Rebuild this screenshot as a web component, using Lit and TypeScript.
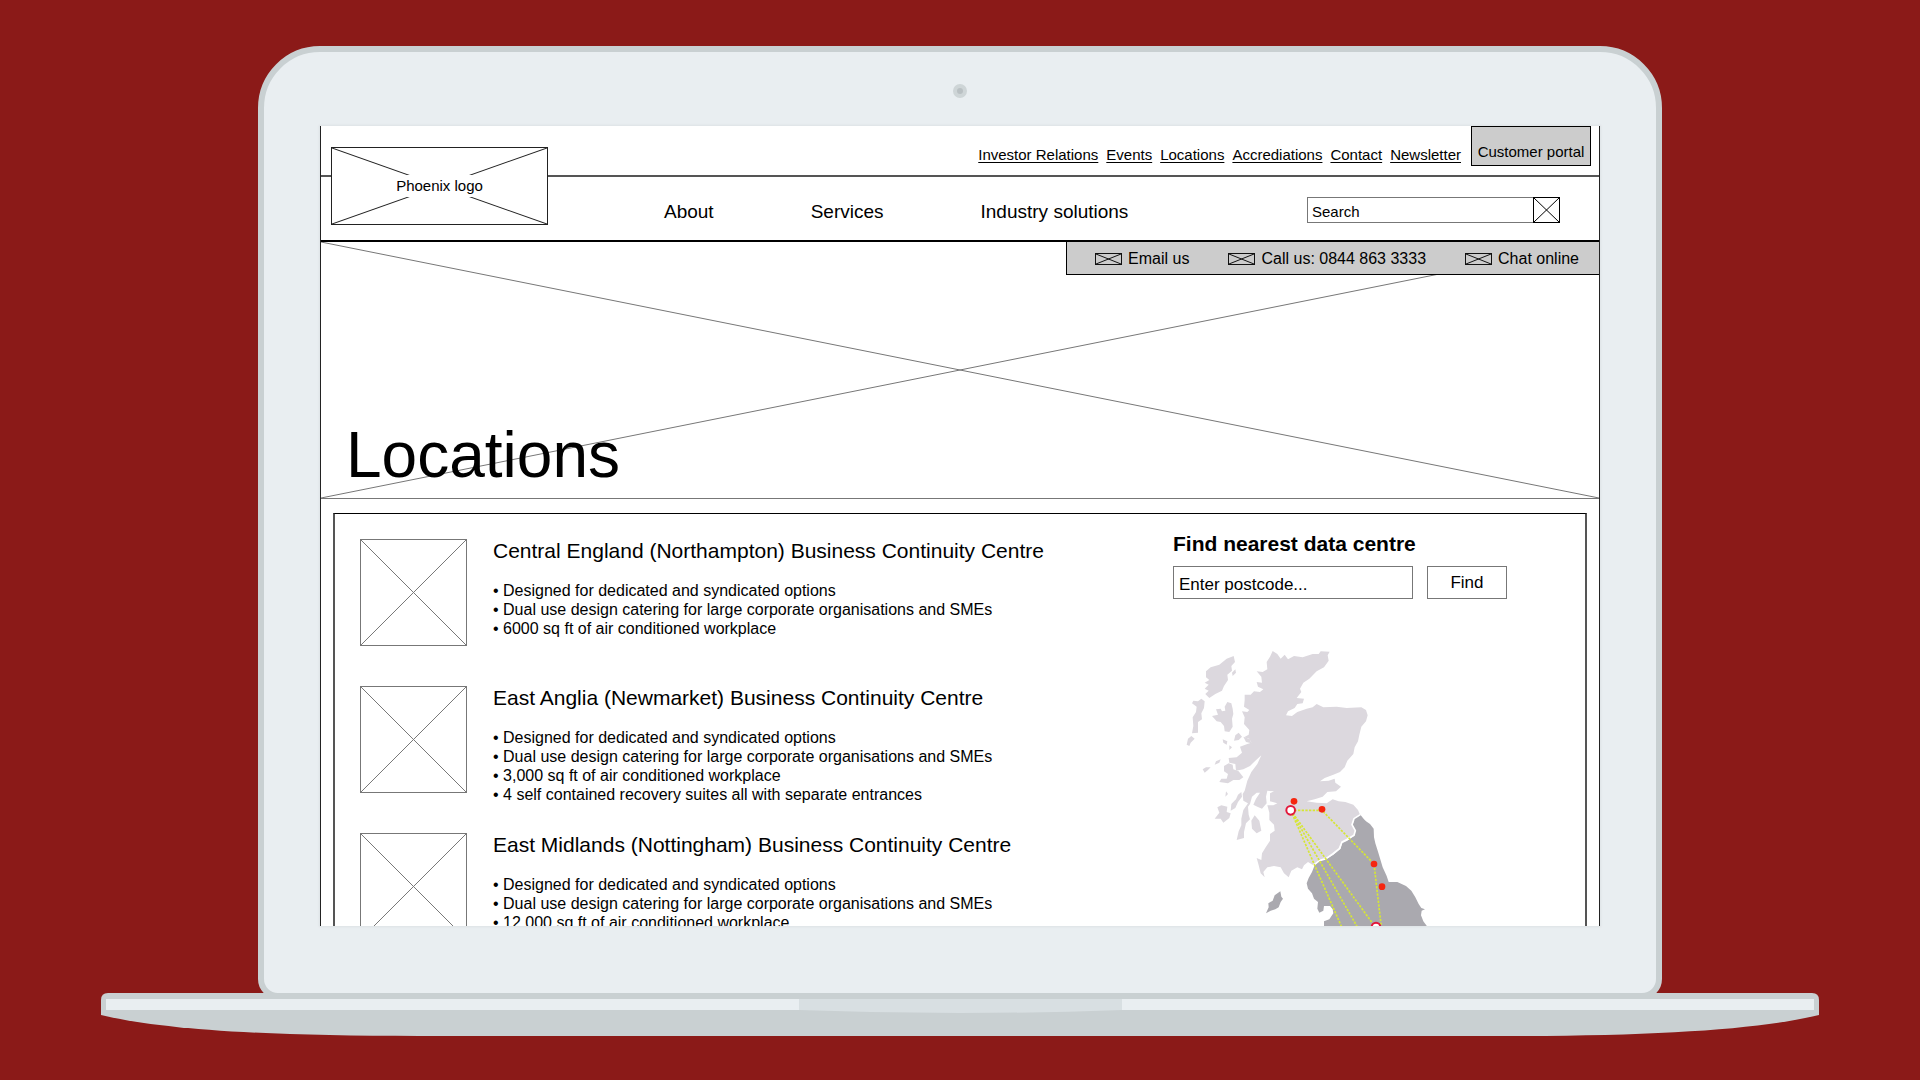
import { LitElement, html, css, svg } from "lit";
import { customElement, property } from "lit/decorators.js";

interface Centre {
  name: string;
  points: string[];
}

const UTILITY_LINKS = ["Investor Relations", "Events", "Locations", "Accrediations", "Contact", "Newsletter"];
const MAIN_LINKS = ["About", "Services", "Industry solutions"];
const CONTACTS = ["Email us", "Call us: 0844 863 3333", "Chat online"];

const CENTRES: Centre[] = [
  {
    name: "Central England (Northampton) Business Continuity Centre",
    points: [
      "Designed for dedicated and syndicated options",
      "Dual use design catering for large corporate organisations and SMEs",
      "6000 sq ft of air conditioned workplace",
    ],
  },
  {
    name: "East Anglia (Newmarket) Business Continuity Centre",
    points: [
      "Designed for dedicated and syndicated options",
      "Dual use design catering for large corporate organisations and SMEs",
      "3,000 sq ft of air conditioned workplace",
      "4 self contained recovery suites all with separate entrances",
    ],
  },
  {
    name: "East Midlands (Nottingham) Business Continuity Centre",
    points: [
      "Designed for dedicated and syndicated options",
      "Dual use design catering for large corporate organisations and SMEs",
      "12,000 sq ft of air conditioned workplace",
    ],
  },
];

/** Wireframe placeholder: a box crossed by its two diagonals. */
@customElement("cross-box")
export class CrossBox extends LitElement {
  static styles = css`
    :host {
      display: block;
      box-sizing: border-box;
      border: 1px solid var(--cross-color, #777);
    }
    .cross {
      display: block;
      width: 100%;
      height: 100%;
    }
    .stroke {
      stroke: var(--cross-color, #777);
      stroke-width: 1;
      vector-effect: non-scaling-stroke;
    }
  `;

  render() {
    return html`<svg class="cross" viewBox="0 0 100 100" preserveAspectRatio="none" aria-hidden="true">
      <line class="stroke" x1="0" y1="0" x2="100" y2="100"></line>
      <line class="stroke" x1="0" y1="100" x2="100" y2="0"></line>
    </svg>`;
  }
}

/** One business continuity centre with its thumbnail and bullet points. */
@customElement("centre-row")
export class CentreRow extends LitElement {
  @property({ attribute: false }) centre!: Centre;

  static styles = css`
    :host {
      display: flex;
      gap: 26px;
      height: 147px;
    }
    .thumb {
      flex: none;
      width: 107px;
      height: 107px;
    }
    .name {
      margin: 0 0 18px;
      font-size: 21px;
      line-height: 24px;
      font-weight: 400;
    }
    .points {
      margin: 0;
      padding: 0;
      list-style: none;
      font-size: 16px;
      line-height: 19px;
    }
    .point::before {
      content: "• ";
    }
  `;

  render() {
    return html`
      <cross-box class="thumb"></cross-box>
      <div>
        <h2 class="name">${this.centre.name}</h2>
        <ul class="points">
          ${this.centre.points.map((p) => html`<li class="point">${p}</li>`)}
        </ul>
      </div>
    `;
  }
}

/** Map of data centres in northern Britain, linked by dotted routes. */
@customElement("centre-map")
export class CentreMap extends LitElement {
  static styles = css`
    :host {
      display: block;
    }
    .map {
      display: block;
      width: 253px;
      height: 300px;
    }
    .north {
      fill: #dcd8de;
    }
    .south {
      fill: #aaa9af;
    }
    .coast {
      fill: none;
      stroke: #fff;
      stroke-width: 5;
      stroke-linejoin: round;
    }
    .route {
      fill: none;
      stroke: #d6e635;
      stroke-width: 5;
      stroke-dasharray: 7 4;
    }
    .site {
      fill: #f5260f;
    }
    .hub {
      fill: #fff;
      stroke: #e3173a;
      stroke-width: 6;
    }
  `;

  render() {
    const sites = [
      [402, 514],
      [486, 538],
      [642, 702],
      [666, 770],
    ];
    const hubs = [
      [392, 541],
      [648, 891],
    ];
    return html`<svg class="map" viewBox="60 45 759 900" role="img" aria-label="Map of data centre locations">
      <path
        class="south"
        d="M601 554 L612 568 L618 574 L630 582 L641 596 L642 622 L646 640 L655 668 L668 712 L680 738 L686 756 L712 756 L738 768 L754 782 L766 802 L776 822 L784 834 L795 838 L785 842 L783 856 L790 874 L802 890 L812 950 L520 950 L492 890 L492 874 L508 868 L520 850 L518 838 L510 828 L492 828 L490 842 L478 848 L472 836 L474 816 L462 806 L456 790 L444 776 L440 760 L446 744 L456 726 L464 706 L478 692 L498 688 L520 674 L542 656 L546 640 L562 632 L584 616 L586 600 L578 586 L582 566 Z"
      ></path>
      <path class="south" d="M361 784 L364 800 L369 806 L362 816 L356 832 L346 838 L332 842 L318 850 L326 832 L325 820 L338 812 L344 796 Z"></path>
      <path
        class="north"
        d="M338 63 L352 72 L362 86 L374 74 L384 88 L402 78 L428 82 L458 72 L476 72 L482 64 L509 65 L503 76 L506 92 L492 112 L470 124 L448 146 L430 158 L420 176 L424 186 L410 204 L432 206 L428 220 L412 222 L404 234 L384 244 L378 256 L396 258 L412 246 L440 236 L458 232 L470 222 L490 232 L530 230 L560 234 L604 232 L618 240 L623 256 L618 274 L604 290 L598 314 L594 334 L584 352 L580 372 L562 392 L554 412 L540 426 L520 434 L494 444 L480 454 L506 452 L524 446 L526 458 L543 470 L528 484 L502 486 L488 500 L464 508 L440 514 L470 518 L500 520 L518 508 L536 514 L556 516 L580 524 L594 540 L600 554 L582 566 L576 584 L586 602 L582 616 L562 628 L546 638 L538 656 L518 672 L498 686 L478 692 L460 706 L444 696 L432 706 L426 718 L412 712 L394 722 L386 742 L372 730 L362 712 L342 708 L322 712 L310 726 L314 742 L302 730 L296 706 L290 684 L304 690 L306 670 L318 650 L330 632 L330 612 L344 602 L342 584 L328 570 L328 548 L322 526 L340 526 L352 520 L330 514 L330 490 L342 484 L322 482 L318 500 L320 520 L306 536 L292 530 L280 524 L288 506 L300 488 L290 488 L276 500 L270 522 L264 530 L266 554 L270 568 L258 580 L252 606 L252 624 L230 630 L236 604 L244 586 L244 566 L250 540 L264 520 L250 512 L248 492 L254 482 L262 452 L274 426 L292 402 L304 376 L286 392 L270 408 L250 418 L228 422 L226 402 L208 398 L206 384 L230 382 L246 368 L240 350 L262 342 L274 338 L268 326 L252 322 L266 314 L268 300 L252 282 L254 262 L246 244 L262 246 L268 240 L252 230 L254 210 L254 194 L272 194 L282 184 L300 186 L310 178 L294 170 L290 156 L306 158 L304 140 L290 124 L308 126 L322 118 L320 96 L330 80 Z"
      ></path>
      <path
        class="north"
        d="M221 78 L225 96 L214 108 L216 122 L202 134 L204 150 L192 168 L186 182 L166 192 L148 204 L136 192 L146 182 L134 176 L146 164 L134 158 L148 150 L138 142 L138 124 L152 112 L178 104 L200 86 Z M226 118 L228 128 L218 138 L216 128 Z"
      ></path>
      <path
        class="north"
        d="M124 206 L134 214 L132 234 L124 250 L126 268 L114 276 L114 308 L96 310 L100 288 L98 262 L108 246 L110 230 L96 220 L100 212 L114 214 Z M94 318 L104 326 L92 338 L88 348 L80 344 L84 326 Z"
      ></path>
      <path
        class="north"
        d="M202 216 L214 220 L218 236 L220 252 L216 266 L218 290 L208 306 L194 304 L192 288 L182 276 L170 274 L156 258 L174 254 L168 238 L182 236 L186 244 L196 242 L194 230 Z M236 308 L246 320 L236 330 L222 332 L226 316 Z M188 328 L202 334 L200 344 L190 338 Z M208 346 L216 352 L208 360 Z M250 320 L270 328 L274 340 L258 336 Z"
      ></path>
      <path
        class="north"
        d="M206 400 L218 404 L220 418 L236 424 L250 442 L238 450 L220 450 L204 460 L178 456 L184 446 L200 446 L204 432 L192 424 L192 408 Z M182 388 L178 398 L164 404 L168 394 Z M152 412 L144 420 L134 428 L128 418 L138 412 Z M198 484 L204 492 L196 500 Z"
      ></path>
      <path
        class="north"
        d="M244 486 L246 500 L234 516 L226 534 L212 542 L214 522 L228 508 L234 494 Z M184 526 L202 530 L200 546 L212 550 L208 564 L190 578 L182 566 L164 566 L178 548 L172 532 Z M284 556 L298 572 L304 602 L290 610 L276 596 L274 572 Z"
      ></path>
      <path
        class="coast"
        d="M601 554 L582 566 L576 584 L586 602 L582 616 L562 628 L546 636 L538 656 L518 672 L498 686 L478 692 L460 706"
      ></path>
      <path class="route" d="M392 541 H486 L642 702 L664 891"></path>
      <path class="route" d="M392 541 L545 891"></path>
      <path class="route" d="M392 541 L592 891"></path>
      <path class="route" d="M392 541 L642 886"></path>
      ${sites.map(([x, y]) => svg`<circle class="site" cx=${x} cy=${y} r="10"></circle>`)}
      ${hubs.map(([x, y]) => svg`<circle class="hub" cx=${x} cy=${y} r="13"></circle>`)}
    </svg>`;
  }
}

@customElement("app-root")
export class AppRoot extends LitElement {
  static styles = css`
    :host {
      display: block;
      min-height: 100vh;
      box-sizing: border-box;
      padding: 46px 101px 44px;
      background: #8b1a18;
      color: #000;
      font-family: "Liberation Sans", Arial, sans-serif;
    }
    * {
      box-sizing: border-box;
    }
    .lid {
      margin: 0 157px;
      padding: 0 56px 67px;
      border: 6px solid #c9d0d2;
      border-radius: 62px 62px 20px 20px;
      background: #e9eef1;
    }
    .bezel {
      display: flex;
      align-items: center;
      justify-content: center;
      height: 74px;
      padding-top: 3px;
    }
    .camera {
      width: 14px;
      height: 14px;
      border: 4px solid #ced5d7;
      border-radius: 50%;
      background: #b9c0c3;
    }
    .base {
      display: block;
      position: relative;
      width: 100%;
      height: 43px;
      margin-top: -6px;
    }
    .metal {
      fill: #c9d0d2;
    }
    .edge {
      fill: #e9eef1;
    }
    .notch {
      fill: #d8dfe2;
    }

    .screen {
      aspect-ratio: 1280 / 800;
      overflow: hidden;
      background: #fff;
      box-shadow: 0 0 2px 1px #dde2e5;
    }
    .page {
      border: solid #222;
      border-width: 0 1px;
    }

    .header {
      display: grid;
      grid-template-columns: 228px 1fr;
      grid-template-rows: 51px 65px;
    }
    .utility {
      grid-area: 1 / 1 / 2 / 3;
      display: flex;
      justify-content: flex-end;
      align-items: flex-start;
      padding-right: 8px;
      border-bottom: 2px solid #555;
    }
    .links {
      display: flex;
      gap: 8px;
      margin-right: 10px;
      padding-top: 20px;
      font-size: 15px;
      line-height: 18px;
    }
    .link {
      color: inherit;
      text-underline-offset: 2px;
    }
    .portal {
      display: flex;
      align-items: flex-end;
      justify-content: center;
      width: 120px;
      height: 40px;
      padding-bottom: 4px;
      border: 1px solid #000;
      background: #ccc;
      color: inherit;
      font-size: 15px;
      line-height: 18px;
      text-decoration: none;
    }
    .primary {
      grid-area: 2 / 1 / 3 / 3;
      display: flex;
      align-items: center;
      justify-content: space-between;
      padding: 3px 39px 0 343px;
      border-bottom: 2px solid #000;
    }
    .menu {
      display: flex;
      gap: 97px;
      padding-top: 3px;
      font-size: 19px;
      line-height: 24px;
    }
    .item {
      color: inherit;
      text-decoration: none;
    }
    .logo {
      grid-area: 1 / 1 / 3 / 2;
      display: grid;
      grid-template: 100% / 100%;
      place-items: center;
      width: 217px;
      height: 78px;
      margin: 21px 0 0 10px;
      background: #fff;
      color: inherit;
      font-size: 15px;
      line-height: 22px;
      text-decoration: none;
      --cross-color: #222;
    }
    .art {
      grid-area: 1 / 1;
      width: 100%;
      height: 100%;
    }
    .label {
      grid-area: 1 / 1;
      z-index: 1;
      padding: 0 4px;
      background: #fff;
    }
    .search {
      display: flex;
      width: 253px;
      height: 26px;
    }
    .query {
      flex: 1;
      min-width: 0;
      padding: 3px 4px 0;
      border: 1px solid #777;
      border-right: 0;
      border-radius: 0;
      background: #fff;
      font: 15px/20px "Liberation Sans", Arial, sans-serif;
    }
    .query::placeholder,
    .postcode::placeholder {
      color: #000;
      opacity: 1;
    }
    .go {
      width: 27px;
      padding: 0;
      border: 0;
      background: #fff;
      --cross-color: #000;
    }
    .fill {
      height: 100%;
    }

    .hero {
      display: grid;
      grid-template: 100% / 100%;
      height: 257px;
    }
    .backdrop {
      grid-area: 1 / 1;
      border-top: 0;
      border-left: 0;
      border-right: 0;
      --cross-color: #777;
    }
    .contacts {
      grid-area: 1 / 1;
      z-index: 1;
      place-self: start end;
      display: flex;
      gap: 39px;
      height: 33px;
      padding: 2px 20px 0 28px;
      border: solid #000;
      border-width: 0 0 1px 1px;
      background: #ccc;
      font-size: 16px;
      line-height: 18px;
    }
    .contact {
      display: flex;
      align-items: center;
      gap: 6px;
      color: inherit;
      text-decoration: none;
      --cross-color: #111;
    }
    .icon {
      width: 27px;
      height: 12px;
    }
    .title {
      grid-area: 1 / 1;
      z-index: 1;
      place-self: end start;
      margin: 0 0 8px 25px;
      font-size: 64px;
      line-height: 72px;
      font-weight: 400;
    }

    .panel {
      display: flex;
      justify-content: space-between;
      margin: 14px 12px 0;
      padding: 25px 78px 25px 25px;
      border: 2px solid #555;
      border-top: 1px solid #000;
      border-bottom: 0;
    }
    .finder {
      width: 334px;
      margin-top: -7px;
    }
    .caption {
      display: block;
      margin-bottom: 10px;
      font-size: 21px;
      line-height: 24px;
      font-weight: 700;
    }
    .form {
      display: flex;
      gap: 14px;
      height: 33px;
      margin-bottom: 46px;
    }
    .postcode {
      width: 240px;
      padding: 4px 5px 0;
      border: 1px solid #777;
      border-radius: 0;
      background: #fff;
      font: 17px/24px "Liberation Sans", Arial, sans-serif;
    }
    .find {
      width: 80px;
      padding: 0;
      border: 1px solid #777;
      background: #fff;
      color: #000;
      font: 17px/24px "Liberation Sans", Arial, sans-serif;
    }
    .chart {
      margin-left: 7px;
    }
  `;

  render() {
    return html`
      <div class="lid">
        <div class="bezel"><div class="camera"></div></div>
        <div class="screen">
          <div class="page">${this.renderHeader()} ${this.renderHero()} ${this.renderPanel()}</div>
        </div>
      </div>
      <svg class="base" viewBox="0 0 1718 43" preserveAspectRatio="none" aria-hidden="true">
        <path
          class="metal"
          d="M7 0 H1711 Q1718 0 1718 7 V22 C1660 36 1560 43 1400 43 H318 C158 43 58 36 0 22 V7 Q0 0 7 0 Z"
        ></path>
        <rect class="edge" x="5" y="6" width="1708" height="11"></rect>
        <path class="notch" d="M698 6 H1021 V17 Q940 20 859 20 Q779 20 698 17 Z"></path>
      </svg>
    `;
  }

  private renderHeader() {
    return html`<header class="header">
      <div class="utility">
        <nav class="links" aria-label="Utility">
          ${UTILITY_LINKS.map((t) => html`<a class="link" href="#">${t}</a>`)}
        </nav>
        <a class="portal" href="#">Customer portal</a>
      </div>
      <div class="primary">
        <nav class="menu" aria-label="Main">
          ${MAIN_LINKS.map((t) => html`<a class="item" href="#">${t}</a>`)}
        </nav>
        <form class="search" role="search">
          <input class="query" type="search" placeholder="Search" aria-label="Search" />
          <button class="go" type="button" aria-label="Search"><cross-box class="fill"></cross-box></button>
        </form>
      </div>
      <a class="logo" href="#">
        <cross-box class="art"></cross-box>
        <span class="label">Phoenix logo</span>
      </a>
    </header>`;
  }

  private renderHero() {
    return html`<section class="hero">
      <cross-box class="backdrop"></cross-box>
      <div class="contacts">
        ${CONTACTS.map((t) => html`<a class="contact" href="#"><cross-box class="icon"></cross-box>${t}</a>`)}
      </div>
      <h1 class="title">Locations</h1>
    </section>`;
  }

  private renderPanel() {
    return html`<main class="panel">
      <div>${CENTRES.map((c) => html`<centre-row .centre=${c}></centre-row>`)}</div>
      <aside class="finder">
        <label class="caption" for="postcode">Find nearest data centre</label>
        <form class="form">
          <input class="postcode" id="postcode" type="text" placeholder="Enter postcode..." />
          <button class="find" type="button">Find</button>
        </form>
        <centre-map class="chart"></centre-map>
      </aside>
    </main>`;
  }
}
